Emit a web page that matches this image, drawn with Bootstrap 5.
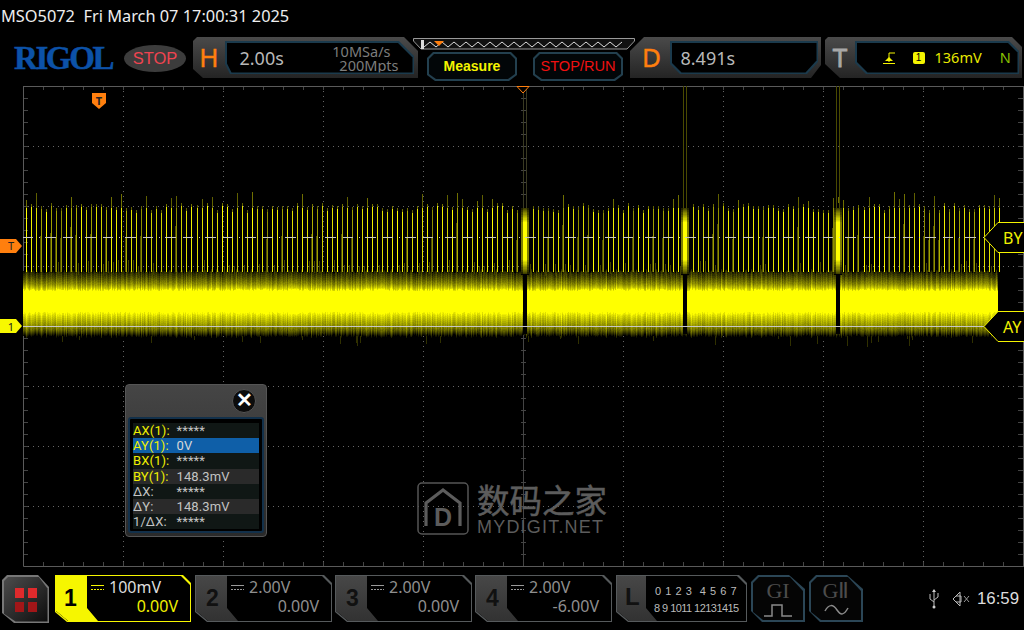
<!DOCTYPE html>
<html lang="en"><head><meta charset="utf-8"><title>MSO5072</title>
<link href="https://cdn.jsdelivr.net/npm/bootstrap@5.3.0/dist/css/bootstrap.min.css" rel="stylesheet">
<style>
html,body{background:#000;margin:0;overflow:hidden}
.osc{width:1024px;height:630px;background:#000;font-family:"Noto Sans","Liberation Sans",sans-serif;color:#ccc;overflow:hidden}
.stat{height:36px;padding:6px 0 0 1px;font-size:16.35px;line-height:21px;color:#eee;white-space:pre}
.hdr{height:48px;padding-top:1px}
.logo{width:103px;margin:4px 0 0 14px;font:bold 33px/34px "Liberation Serif",serif;color:#0c52a8;letter-spacing:-2.4px;-webkit-text-stroke:.5px #0c52a8}
.stopov{width:62px;height:27px;margin:8px 7px 0 7px;border-radius:50%;background:#3c3c3c;color:#ef4450;font:16.5px/27px "Liberation Sans",sans-serif;text-align:center}
.pnl{height:41px;background:linear-gradient(#4a4a4a,#242424);position:relative;flex:none}
.cutA{clip-path:polygon(4px 0,calc(100% - 14px) 0,100% 14px,100% 100%,10px 100%,0 calc(100% - 9px),0 4px)}
.cutD{clip-path:polygon(14px 0,100% 0,100% calc(100% - 13px),calc(100% - 10px) 100%,0 100%,0 14px)}
.cutT{clip-path:polygon(3px 0,calc(100% - 10px) 0,100% 10px,100% 100%,15px 100%,0 calc(100% - 14px),0 3px)}
.inH{clip-path:polygon(0 0,calc(100% - 15px) 0,100% 15px,100% 100%,5px 100%,0 calc(100% - 10px))}
.inD{clip-path:polygon(0 0,100% 0,100% calc(100% - 12px),calc(100% - 11px) 100%,10px 100%,0 calc(100% - 10px))}
.inT{clip-path:polygon(0 0,calc(100% - 10px) 0,100% 10px,100% 100%,11px 100%,0 calc(100% - 11px))}
.inB{background:#1b3a4c;padding:1.5px;margin:4px 4px 4px 0;flex:1}
.inIn{background:#000;height:100%}
.letr{font-size:26px;line-height:40px;color:#ff7f0e;text-align:center;flex:none;-webkit-text-stroke:.4px currentColor}
.val{font-size:18px;color:#b8b8b8;line-height:30px}
.minfo{font-size:14.5px;line-height:14px;color:#7d7d7d;text-align:right;margin-top:1px}
.mi1{padding-right:8px}
.mcol{width:222px;margin-left:-5px;flex:none;position:relative;z-index:2}
.btnp{width:90px;height:29px;background:#23404f;padding:2px;clip-path:polygon(6px 0,calc(100% - 6px) 0,100% 6px,100% calc(100% - 6px),calc(100% - 8px) 100%,8px 100%,0 calc(100% - 6px),0 6px)}
.btni{height:100%;background:#020608;text-align:center;font:bold 14px/25px "Liberation Sans",sans-serif;color:#f4f400;clip-path:polygon(5px 0,calc(100% - 5px) 0,100% 5px,100% calc(100% - 5px),calc(100% - 7px) 100%,7px 100%,0 calc(100% - 5px),0 5px)}
.btnr{color:#f01010;font-weight:400;font-size:14.6px}
.scopew{height:486px;position:relative}
.scopew svg.wv{display:block}
.dlg{position:absolute;left:125px;top:300px;width:142px;height:153px;background:linear-gradient(#454545,#2a2a2a);border:1px solid #555;border-radius:4px}
.xbtn{position:absolute;left:106px;top:4px;width:24px;height:24px;border-radius:50%;background:#0c0c0c;border:1px solid #555;color:#fff;font:bold 20px/21px "Liberation Sans",sans-serif;text-align:center}
.dlgin{position:absolute;left:2px;top:32px;width:136px;height:116px;background:#000;border:2px solid #12304a;border-radius:3px;padding:4px 3px 3px 3px}
.drow{height:15.2px;font:13px/15px Roboto,"Noto Sans",sans-serif;color:#c4c4c4;background:#2a2a2a;white-space:nowrap;letter-spacing:.1px}
.drow:nth-child(odd){background:#101715}
.drow.sel{background:#0f5fa8;color:#d8d8d8}
.dk{width:43.500px;flex:none}
.yl .dk{color:#f0f000}
.wm{position:absolute;left:417px;top:398px;color:#5c5c5c}
.wmz{font:32.5px/34px "Noto Sans CJK SC",sans-serif;margin:0 0 3px 0;white-space:nowrap;-webkit-text-stroke:.5px #5c5c5c}
.wme{font:18px/16px "Liberation Sans",sans-serif;letter-spacing:1.2px;white-space:nowrap}
.bot{height:60px;padding:5px 0 0 2px}
.sbtn{width:47px;height:48px;background:#777;padding:1.5px;clip-path:polygon(5px 0,36px 0,100% 12px,100% 100%,12px 100%,0 38px,0 5px);flex:none}
.sbin{height:100%;background:linear-gradient(135deg,#4c4c4c,#0d0d0d);clip-path:polygon(5px 0,35px 0,100% 12px,100% 100%,12px 100%,0 37px,0 5px);padding:11px 0 0 11px}
.rq{width:9px;height:10px;background:#df2a2c}
.rd{background:#a21618}
.rqg{width:23px;gap:4px 4px}
.chn{width:137px;height:47px;background:#565a5c;padding:1px;flex:none;clip-path:polygon(0 0,calc(100% - 8px) 0,100% 8px,100% 100%,12px 100%,0 calc(100% - 10px))}
.chin{height:100%;background:#000;clip-path:polygon(0 0,calc(100% - 9px) 0,100% 9px,100% 100%,12px 100%,0 calc(100% - 10px))}
.chnum{width:42px;height:100%;background:linear-gradient(#474747,#323232);clip-path:polygon(0 0,31px 0,31px 32px,42px 100%,12px 100%,0 calc(100% - 10px));font:bold 23px/45px "Liberation Sans",sans-serif;color:#111;flex:none;padding-left:10px}
.chv{flex:1;position:relative;font-size:16px;line-height:18px;color:#8f8f8f;padding:2px 12px 0 4px;margin-left:-11px}
.chv svg{margin-right:5px;vertical-align:2px}
.chb{text-align:right;margin-top:1px}
.on{background:#f6f600;width:136px}
.on .chnum{background:#f6f600;color:#000;padding-left:8px}
.on .chv{color:#ddd}
.on .chb{color:#f0f000}
.lgc{width:131px}
.lgc .chnum{font-size:24px;line-height:42px;width:40px;clip-path:polygon(0 0,29px 0,29px 32px,40px 100%,12px 100%,0 calc(100% - 10px));padding-left:8px}
.dg{font:11px/17px "Liberation Sans",sans-serif;color:#bbb;padding:7px 0 0 0;margin-left:-2px;white-space:pre;flex:1}
.dg1{letter-spacing:.55px}
.dg2{letter-spacing:-.55px;margin-left:-1px}
.gb{width:54px;height:47px;background:#2b4656;padding:2px;clip-path:polygon(7px 0,38px 0,100% 14px,100% 100%,11px 100%,0 36px,0 7px);flex:none}
.gbi{height:100%;background:#050505;clip-path:polygon(6px 0,37px 0,100% 14px,100% 100%,10px 100%,0 35px,0 6px);text-align:center}
.gt{font:22px/22px "Liberation Serif",serif;color:#4c4c4c;padding-top:3px}
.tray{font:16.8px/47px "Liberation Sans",sans-serif;color:#ddd;margin-left:auto;padding-right:5px}
</style></head><body>
<div class="osc d-flex flex-column">
 <div class="stat">MSO5072  Fri March 07 17:00:31 2025</div>
 <div class="hdr d-flex align-items-start">
  <div class="logo flex-none">RIGOL</div>
  <div class="stopov flex-none">STOP</div>
  <div class="pnl cutA d-flex" style="width:225px">
   <div class="letr" style="width:32px">H</div>
   <div class="inB inH"><div class="inIn inH d-flex justify-content-between" style="padding:0 14px 0 13px"><span class="val">2.00s</span><div class="minfo"><div class="mi1">10MSa/s</div><div>200Mpts</div></div></div></div>
  </div>
  <div class="mcol">
   <svg width="222" height="14" class="d-block" viewBox="0 0 222 14"><path d="M.5 1.500H221.500V4L214 12H8L.5 4z" fill="#111" stroke="#999"/><polyline id="zz" fill="none" stroke="#ddd"/><rect x="8" y="3" width="3" height="9" fill="#ddd"/><path d="M21 4h10l-5 5z" fill="#ff7f0e"/></svg>
   <div class="d-flex" style="gap:16px;margin:1px 0 0 14px"><div class="btnp"><div class="btni">Measure</div></div><div class="btnp"><div class="btni btnr">STOP/RUN</div></div></div>
  </div>
  <div class="pnl cutD d-flex" style="width:191px;margin-left:-5px">
   <div class="letr" style="width:40px;padding-left:3px">D</div>
   <div class="inB inD" style="margin-right:3px"><div class="inIn inD" style="padding-left:9px"><span class="val">8.491s</span></div></div>
  </div>
  <div class="pnl cutT d-flex" style="width:197px;margin-left:4px">
   <div class="letr" style="width:30px;color:#a8a8a8;-webkit-text-stroke:.8px #a8a8a8">T</div>
   <div class="inB inT" style="margin-right:3px"><div class="inIn inT d-flex align-items-center" style="font-size:14.5px;color:#e8e800;padding-left:26px">
    <svg width="12" height="12" viewBox="0 0 12 12"><path d="M0 11.500H12M6 1v9M6 1H12" stroke="#f4f400" fill="none"/><path d="M2 9l4-4 4 4z" fill="#f4f400"/></svg>
    <span class="text-center" style="background:#f4f400;color:#000;width:12px;height:12px;font:10px/12px 'Liberation Sans',sans-serif;border-radius:2px;margin-left:18px">1</span>
    <span style="margin-left:10px">136mV</span><span style="margin-left:18px;color:#8ac000">N</span>
   </div></div>
  </div>
 </div>
 <div class="scopew">
  <svg class="wv" id="wv" width="1024" height="486" viewBox="0 84 1024 486" shape-rendering="crispEdges">
   <g id="gr"></g><g id="wave"></g>
   <g shape-rendering="auto" font-family="Noto Sans,sans-serif">
    <path d="M99 109l-7-6V93h14v10z" fill="#ff7f0e"/><text x="99" y="105" text-anchor="middle" font-size="11" font-weight="700" fill="#222">T</text>
    <path d="M517 86.500H529L523 93z" fill="#000" stroke="#ff7f0e"/>
    <path d="M0 239H16L22 246 16 253H0z" fill="#ff7f0e"/><text x="11" y="250" text-anchor="middle" font-size="11" fill="#222">T</text>
    <path d="M0 319H16L22 326 16 333H0z" fill="#f8f800"/><text x="11" y="331" text-anchor="middle" font-size="11" fill="#222">1</text>
    <path d="M1024 222.500H998L984 237.500 998 252.500H1024" fill="#000" stroke="#f4f400"/><text x="1003" y="244" font-size="16" fill="#f0f000">BY</text>
    <path d="M1024 311.500H998L984 326.500 998 341.500H1024" fill="#000" stroke="#f4f400"/><text x="1003" y="333" font-size="16" fill="#f0f000">AY</text>
   </g>
  </svg>
  <div class="dlg">
   <div class="xbtn">✕</div>
   <div class="dlgin">
    <div class="drow yl d-flex"><span class="dk">AX(1):</span><span>*****</span></div>
    <div class="drow yl sel d-flex"><span class="dk">AY(1):</span><span>0V</span></div>
    <div class="drow yl d-flex"><span class="dk">BX(1):</span><span>*****</span></div>
    <div class="drow yl d-flex"><span class="dk">BY(1):</span><span>148.3mV</span></div>
    <div class="drow d-flex"><span class="dk">ΔX:</span><span>*****</span></div>
    <div class="drow d-flex"><span class="dk">ΔY:</span><span>148.3mV</span></div>
    <div class="drow d-flex"><span class="dk">1/ΔX:</span><span>*****</span></div>
   </div>
  </div>
  <div class="wm d-flex">
   <svg width="52" height="54" viewBox="0 0 52 54" class="me-2"><rect x="1" y="1" width="50" height="51" rx="4" fill="none" stroke="#555" stroke-width="1.500"/><path d="M9 44V21L26 8 43 21V44" fill="none" stroke="#5c5c5c" stroke-width="3.200"/><text x="26" y="44" text-anchor="middle" font-family="Liberation Sans" font-weight="700" font-size="25" fill="#5c5c5c">D</text></svg>
   <div><div class="wmz">数码之家</div><div class="wme">MYDIGIT.NET</div></div>
  </div>
 </div>
 <div class="bot d-flex">
  <div class="sbtn"><div class="sbin"><div class="rqg d-flex flex-wrap"><i class="rq"></i><i class="rq"></i><i class="rq rd"></i><i class="rq rd"></i></div></div></div>
  <div class="chn on" style="margin-left:6px"><div class="chin d-flex"><div class="chnum">1</div><div class="chv"><svg width="13" height="7"><path d="M0 1.500H13" stroke="#f4f400"/><path d="M0 5.500H13" stroke="#f4f400" stroke-dasharray="2 1"/></svg><span>100mV</span><div class="chb">0.00V</div></div></div></div>
  <div class="chn" style="margin-left:4px"><div class="chin d-flex"><div class="chnum">2</div><div class="chv"><svg width="13" height="7"><path d="M0 1.500H13" stroke="#999"/><path d="M0 5.500H13" stroke="#999" stroke-dasharray="2 1"/></svg><span>2.00V</span><div class="chb">0.00V</div></div></div></div>
  <div class="chn" style="margin-left:3px"><div class="chin d-flex"><div class="chnum">3</div><div class="chv"><svg width="13" height="7"><path d="M0 1.500H13" stroke="#999"/><path d="M0 5.500H13" stroke="#999" stroke-dasharray="2 1"/></svg><span>2.00V</span><div class="chb">0.00V</div></div></div></div>
  <div class="chn" style="margin-left:3px"><div class="chin d-flex"><div class="chnum">4</div><div class="chv"><svg width="13" height="7"><path d="M0 1.500H13" stroke="#999"/><path d="M0 5.500H13" stroke="#999" stroke-dasharray="2 1"/></svg><span>2.00V</span><div class="chb">-6.00V</div></div></div></div>
  <div class="chn lgc" style="margin-left:4px"><div class="chin d-flex"><div class="chnum">L</div><div class="dg"><div class="dg1">0 1 2 3  4 5 6 7</div><div class="dg2">8 9 1011 12131415</div></div></div></div>
  <div class="gb" style="margin-left:4px"><div class="gbi"><div class="gt">GI</div><svg class="d-block mx-auto" width="30" height="16" viewBox="0 0 30 16"><path d="M1 14H9V3H19V14H29" fill="none" stroke="#8a8a8a" stroke-width="1.500"/></svg></div></div>
  <div class="gb" style="margin-left:4px"><div class="gbi"><div class="gt">GⅡ</div><svg class="d-block mx-auto" width="30" height="16" viewBox="0 0 30 16"><path d="M4 9C8 2 12 2 16 8S23 13 27 6" fill="none" stroke="#8a8a8a" stroke-width="1.500"/></svg></div></div>
  <div class="tray d-flex align-items-start">
   <svg width="12" height="20" viewBox="0 0 12 20" style="margin:14px 12px 0 0"><path d="M6 1V18M2 5V10L6 13M10 4V8L6 11" fill="none" stroke="#bbb"/><circle cx="6" cy="18" r="1.500" fill="#ccc"/><path d="M6 0l-2 3h4z" fill="#ccc"/></svg>
   <svg width="18" height="16" viewBox="0 0 18 16" style="margin:16px 7px 0 0"><path d="M1 8L8 1V15ZM4 5H9V11H4" fill="none" stroke="#bbb"/><path d="M12 5l5 6M17 5l-5 6" stroke="#999"/></svg>
   <span>16:59</span>
  </div>
 </div>
</div>
<script src="https://cdn.jsdelivr.net/npm/bootstrap@5.3.0/dist/js/bootstrap.bundle.min.js"></script>
<script>
(function(){
var NS='http://www.w3.org/2000/svg',seed=12345;
function R(){seed=(seed*1664525+1013904223)>>>0;return seed/4294967296;}
function P(par,d,at){var e=document.createElementNS(NS,'path');e.setAttribute('d',d);for(var k in at)e.setAttribute(k,at[k]);par.appendChild(e);}
var z='';for(var i=0;i<34;i++){z+=(11+i*6)+','+(i%2?5:10)+' ';}
document.getElementById('zz').setAttribute('points',z);
var g=document.getElementById('gr'),d='',t='';
for(var x=123;x<1023;x+=100){if(x!=523)d+='M'+x+'.5 86V566';}
for(var y=146;y<566;y+=60){if(y!=326)d+='M23 '+y+'.5H1023';}
P(g,d,{stroke:'#666','stroke-dasharray':'1 4',fill:'none'});
for(x=23;x<=1023;x+=20){t+='M'+x+' 86v4M'+x+' 566v-4M'+x+' 324v5';}
for(y=86;y<=566;y+=12){t+='M23 '+y+'h5M1023 '+y+'h-5M521 '+y+'h5';}
t+='M523.500 86V566M23 326.500H1023';
P(g,t,{stroke:'#444',fill:'none'});
P(g,'M23.500 566V86H1023.500V566H23.500',{stroke:'#5a5a5a',fill:'none'});
var w=document.getElementById('wave'),L={};
function add(l,c,x,y,h){l=Math.max(0,Math.min(255,Math.round(l/16)*16));if(l>240)l=255;if(l<16)return;var k=c+'|'+l;(L[k]=L[k]||[]).push('M'+x+' '+y+'h1v'+h+'h-1z');}
var T=[[269,0],[271,40],[275,70],[279,105],[283,145],[287,205],[289,255]],B=[[313,255],[317,215],[322,175],[327,140],[331,95],[334,50],[337,0]];
function lv(y,o){var A=y<300?T:B;if(y>=289&&y<=313)return 255;if(y<A[0][0]||y>A[A.length-1][0])return 0;for(var i=0;i<A.length-1;i++){if(y>=A[i][0]&&y<=A[i+1][0]){return (A[i][1]+(A[i+1][1]-A[i][1])*(y-A[i][0])/(A[i+1][0]-A[i][0]))+o;}}return 0;}
for(x=23;x<998;x++){
 var sp=((x-26)%5+5)%5<1,o=(R()-.5)*24+(sp?22:-6),j=Math.floor(R()*3);
 var run=null,st=0;
 for(y=267;y<340;y++){var v=lv(y+(y<300?-j:j),o);if(v>255)v=255;var q=Math.round(v/16);
  if(q!==run){if(run)add(run*16,0,x,st,y-st);run=q;st=y;}}
 if(run)add(run*16,0,x,st,340-st);
 if(R()<.04)add(40,1,x,336,3+Math.floor(R()*9));
}
for(i=0;i<195;i++){
 x=Math.round(26+i*5.015);var top=203+Math.floor(R()*8);if(R()<.18)top=192+Math.floor(R()*10);
 var b=205+R()*50,dim=R()<.25,m=top<203?208:top+3;
 add(b*.45,2,x,top,m-top);
 add(dim?b*.7:b,2,x,m,272-m);
 if(dim){add(80,2,x-1,top+30,272-top-30);}
 if(R()<.4)add(56,2,x+2,260+Math.floor(R()*7),12);
}
Object.keys(L).sort(function(a,b){var A=a.split('|'),C=b.split('|');return A[0]-C[0]||A[1]-C[1];}).forEach(function(k){var l=+k.split('|')[1];P(w,L[k].join(''),{fill:'rgb('+l+','+l+',0)'});});
[[523,526],[683,686],[836,839]].forEach(function(a){
 var s=a[0],W=a[1]-s+1,yy,pth={};
 P(w,'M'+(s-2)+' 203h'+(W+4)+'v72h-'+(W+4)+'z',{fill:'#000'});
 for(yy=208;yy<274;yy++){
  var e=Math.min(yy-208,273-yy)/14;if(e>1)e=1;
  var hi=Math.round((70+185*e)/16)*16;if(hi>240)hi=255;
  var lo=Math.round(hi*.48/16)*16;
  var a1='rgb('+hi+','+hi+',0)',a2='rgb('+lo+','+lo+',0)';
  pth[a2]=(pth[a2]||'')+'M'+(s-2)+' '+yy+'h'+(W+4)+'v1h-'+(W+4)+'z';
  pth[a1+' ']=(pth[a1+' ']||'')+'M'+(s)+' '+yy+'h'+W+'v1h-'+W+'z';
 }
 Object.keys(pth).sort(function(m,n){return (m.slice(-1)==' ')-(n.slice(-1)==' ');}).forEach(function(c){P(w,pth[c],{fill:c.trim()});});
 P(w,'M'+s+' 274h'+W+'v60h-'+W+'z',{fill:'#000'});
 var c=s==523?'#3a3a22':'#4a4a00';
 P(w,'M'+s+' 86h1v122h-1zM'+(s+3)+' 86h1v122h-1z',{fill:c});
});
var dash='',xx=23,pat=[10,6,1,5,11,7];var k=0;while(xx<984){var e=Math.min(984,xx+pat[k%6]);if(k%2==0)dash+='M'+xx+' 237h'+(e-xx)+'v1h-'+(e-xx)+'z';xx=e;k++;}
P(w,dash,{fill:'#c8c8c8'});
P(w,'M23 326h961v1H23z',{fill:'#c8c8c8'});
})();
</script>
</body></html>
